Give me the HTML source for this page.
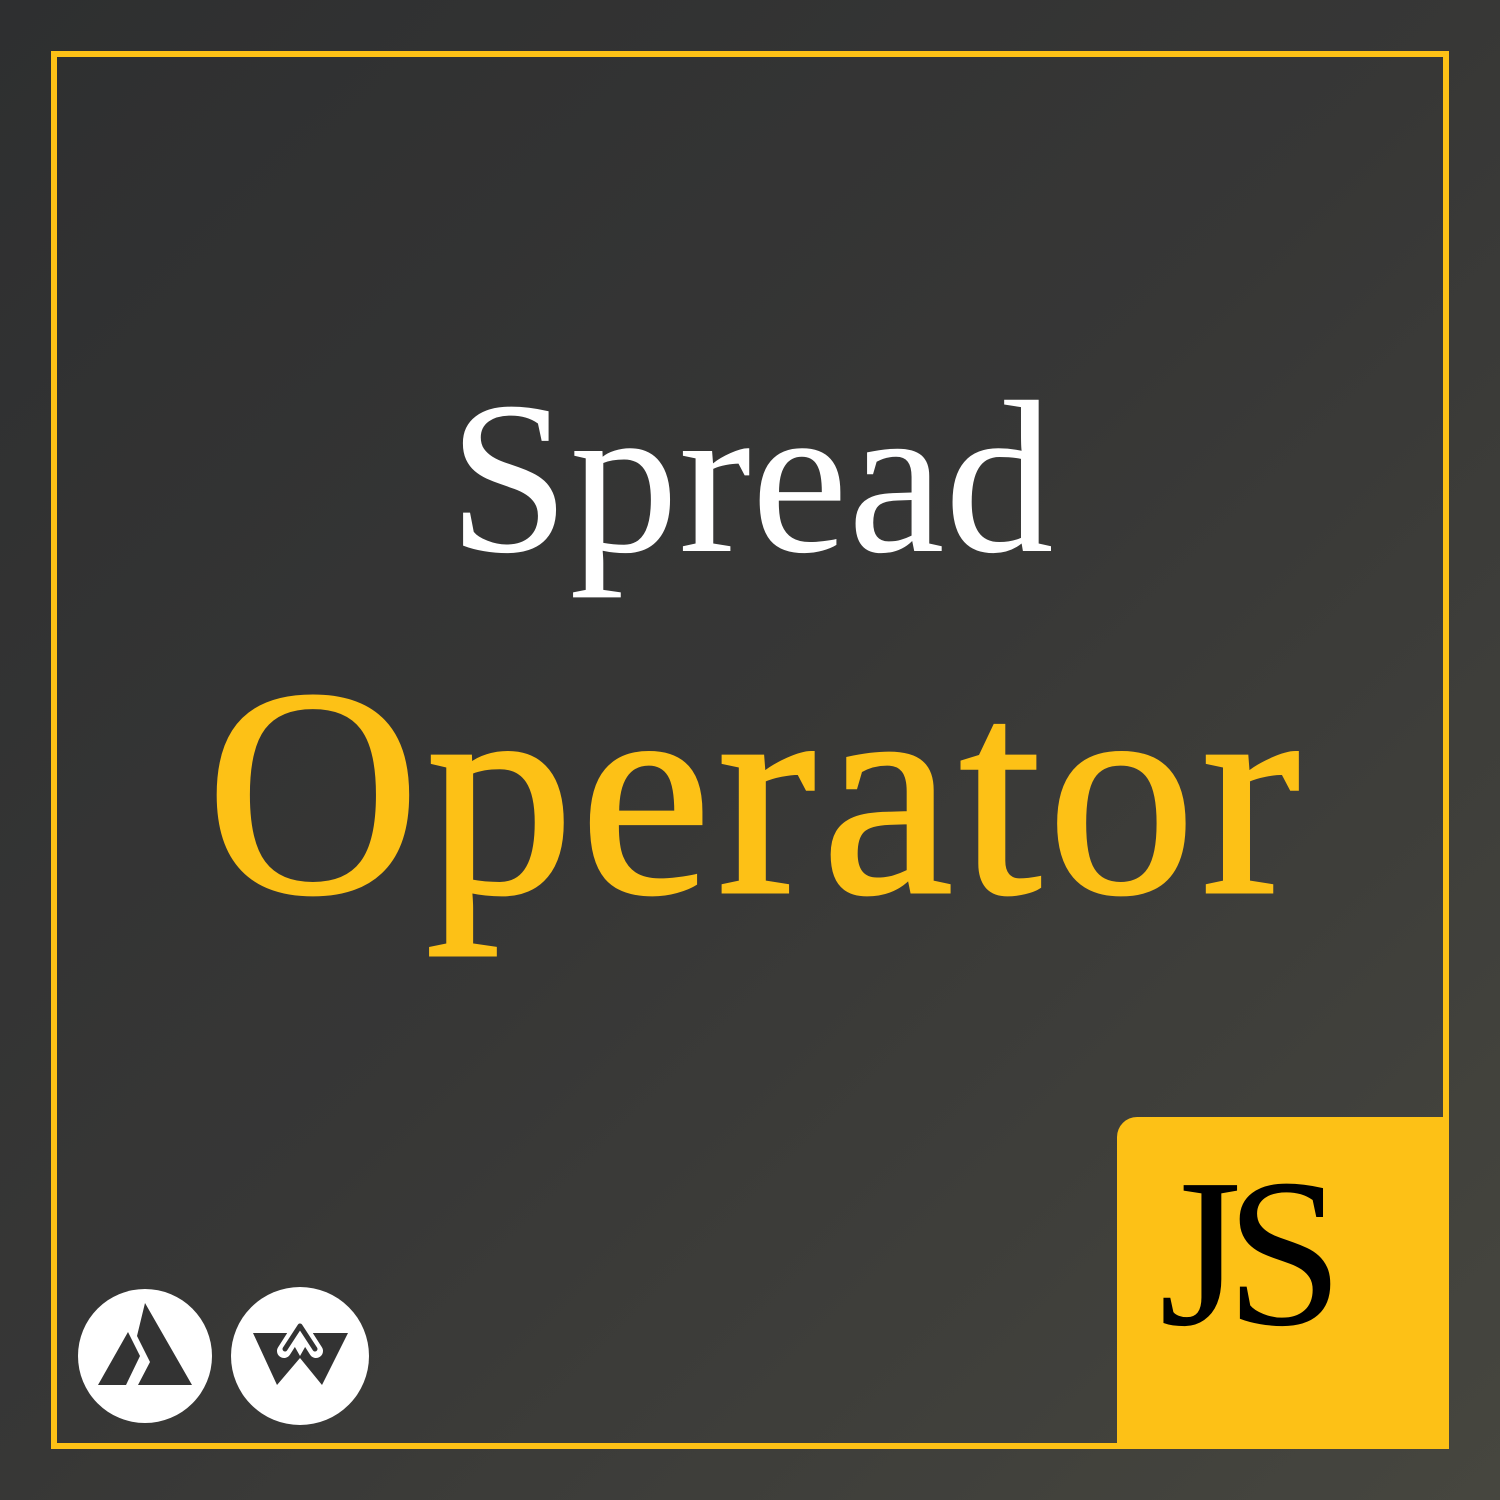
<!DOCTYPE html>
<html><head><style>
html,body{margin:0;padding:0;}
body{width:1500px;height:1500px;position:relative;overflow:hidden;background:linear-gradient(135deg,#2e2f30 0%,#373736 50%,#46463f 100%);font-family:"Liberation Serif",serif;}
.frame{position:absolute;left:51px;top:51px;width:1386px;height:1386px;border:6px solid #fdc116;}
.js{position:absolute;left:1117px;top:1117px;width:332px;height:332px;background:#fdc116;border-top-left-radius:20px;}
.js span{position:absolute;left:42px;top:30px;font-size:212px;line-height:1;color:#000;letter-spacing:-16px;}
.t1{position:absolute;left:0;width:1500px;text-align:center;top:370px;font-size:218px;line-height:1;color:#fff;padding-left:2px;box-sizing:border-box;}
.t2{position:absolute;left:0;width:1500px;text-align:center;top:645px;font-size:296px;line-height:1;color:#fdc116;letter-spacing:6px;padding-left:12px;box-sizing:border-box;-webkit-text-stroke:3px #fdc116;}
svg{position:absolute;left:0;top:0;}
</style></head><body>
<div class="frame"></div>
<div class="js"><span>JS</span></div>
<div class="t1">Spread</div>
<div class="t2">Operator</div>
<svg width="1500" height="1500">
<circle cx="145" cy="1356" r="67" fill="#fff"/>
<path d="M145 1303 L192 1385 L138 1385 L150 1362 L137 1336 Z" fill="#333"/>
<path d="M128 1332 L140 1356 L126 1385 L98 1385 Z" fill="#333"/>
<circle cx="300" cy="1356" r="69" fill="#fff"/>
<path d="M253 1333 L287 1333 L300 1356 L313 1333 L348 1333 L322 1385 L300 1358 L277 1385 Z" fill="#333"/>
<path d="M284 1351 L300 1326 L316 1351" fill="none" stroke="#fff" stroke-width="14" stroke-linecap="round" stroke-linejoin="round"/>
<path d="M285 1349 L300 1326 L315 1349" fill="none" stroke="#333" stroke-width="5" stroke-linecap="round" stroke-linejoin="round"/>
</svg>
</body></html>
